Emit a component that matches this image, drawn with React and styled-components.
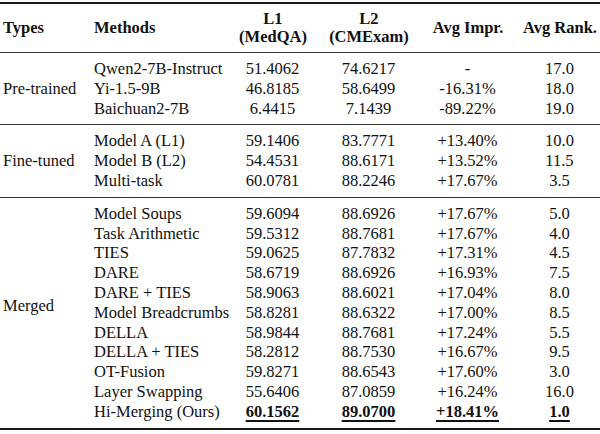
import React from "react";
import styled, { createGlobalStyle } from "styled-components";

const Global = createGlobalStyle`
  body {
    margin: 0;
    background: #fff;
    font-family: "Liberation Serif", "Times New Roman", serif;
    color: #111;
  }
`;

const Table = styled.table`
  width: 600px;
  border-collapse: collapse;
  table-layout: fixed;
  font-family: "Liberation Serif", "Times New Roman", serif;
  font-size: 16.5px;
  color: #111;
  margin-top: 2px;
  border-top: 2px solid #1a1a1a;
  border-bottom: 2px solid #1a1a1a;
`;

const HeadRow = styled.tr`
  border-bottom: 1px solid #333;
`;

const HeadCell = styled.th`
  font-weight: bold;
  height: 48px;
  line-height: 18px;
  padding: 0 0 0 ${(p) => p.$pad || 0}px;
  vertical-align: middle;
  white-space: nowrap;
  text-align: ${(p) => (p.$left ? "left" : "center")};
`;

const Group = styled.tbody`
  border-bottom: 1px solid #333;
  &:last-child {
    border-bottom: none;
  }
`;

const Row = styled.tr`
  & > td {
    height: 19.8px;
    padding-top: ${(p) => (p.$first ? "6px" : "0")};
    padding-bottom: ${(p) => (p.$last ? "6px" : "0")};
  }
`;

const TypeCell = styled.td`
  padding: 0 0 ${(p) => p.$lift || 0}px 3px !important;
  vertical-align: middle;
  white-space: nowrap;
`;

const MethodCell = styled.td`
  padding-left: 3px;
  white-space: nowrap;
  line-height: 19.8px;
`;

const NumCell = styled.td`
  text-align: center;
  white-space: nowrap;
  line-height: 19.8px;
  padding-left: ${(p) => p.$pad || 0}px;
`;

const Best = styled.span`
  font-weight: bold;
  text-decoration: underline;
  text-decoration-thickness: 1.5px;
  text-underline-offset: 3px;
`;

const groups = [
  {
    type: "Pre-trained",
    rows: [
      ["Qwen2-7B-Instruct", "51.4062", "74.6217", "-", "17.0"],
      ["Yi-1.5-9B", "46.8185", "58.6499", "-16.31%", "18.0"],
      ["Baichuan2-7B", "6.4415", "7.1439", "-89.22%", "19.0"],
    ],
  },
  {
    type: "Fine-tuned",
    rows: [
      ["Model A (L1)", "59.1406", "83.7771", "+13.40%", "10.0"],
      ["Model B (L2)", "54.4531", "88.6171", "+13.52%", "11.5"],
      ["Multi-task", "60.0781", "88.2246", "+17.67%", "3.5"],
    ],
  },
  {
    type: "Merged",
    lift: 14,
    rows: [
      ["Model Soups", "59.6094", "88.6926", "+17.67%", "5.0"],
      ["Task Arithmetic", "59.5312", "88.7681", "+17.67%", "4.0"],
      ["TIES", "59.0625", "87.7832", "+17.31%", "4.5"],
      ["DARE", "58.6719", "88.6926", "+16.93%", "7.5"],
      ["DARE + TIES", "58.9063", "88.6021", "+17.04%", "8.0"],
      ["Model Breadcrumbs", "58.8281", "88.6322", "+17.00%", "8.5"],
      ["DELLA", "58.9844", "88.7681", "+17.24%", "5.5"],
      ["DELLA + TIES", "58.2812", "88.7530", "+16.67%", "9.5"],
      ["OT-Fusion", "59.8271", "88.6543", "+17.60%", "3.0"],
      ["Layer Swapping", "55.6406", "87.0859", "+16.24%", "16.0"],
      ["Hi-Merging (Ours)", "60.1562", "89.0700", "+18.41%", "1.0", true],
    ],
  },
];

// left padding per numeric column, so the rank column sits where the reference has it
const numPad = [0, 0, 0, 14];

export default function App() {
  return (
    <>
      <Global />
      <Table>
        <colgroup>
          <col style={{ width: 91 }} />
          <col style={{ width: 147 }} />
          <col style={{ width: 70 }} />
          <col style={{ width: 122 }} />
          <col style={{ width: 76 }} />
          <col style={{ width: 94 }} />
        </colgroup>
        <thead>
          <HeadRow>
            <HeadCell $left $pad={3}>Types</HeadCell>
            <HeadCell $left $pad={3}>Methods</HeadCell>
            <HeadCell>
              L1
              <br />
              (MedQA)
            </HeadCell>
            <HeadCell>
              L2
              <br />
              (CMExam)
            </HeadCell>
            <HeadCell>Avg Impr.</HeadCell>
            <HeadCell $pad={14}>Avg Rank.</HeadCell>
          </HeadRow>
        </thead>
        {groups.map((g) => (
          <Group key={g.type}>
            {g.rows.map((r, i) => {
              const best = r[5];
              return (
                <Row key={r[0]} $first={i === 0} $last={i === g.rows.length - 1}>
                  {i === 0 && (
                    <TypeCell rowSpan={g.rows.length} $lift={g.lift}>
                      {g.type}
                    </TypeCell>
                  )}
                  <MethodCell>{r[0]}</MethodCell>
                  {r.slice(1, 5).map((v, j) => (
                    <NumCell key={j} $pad={numPad[j]}>
                      {best ? <Best>{v}</Best> : v}
                    </NumCell>
                  ))}
                </Row>
              );
            })}
          </Group>
        ))}
      </Table>
    </>
  );
}
